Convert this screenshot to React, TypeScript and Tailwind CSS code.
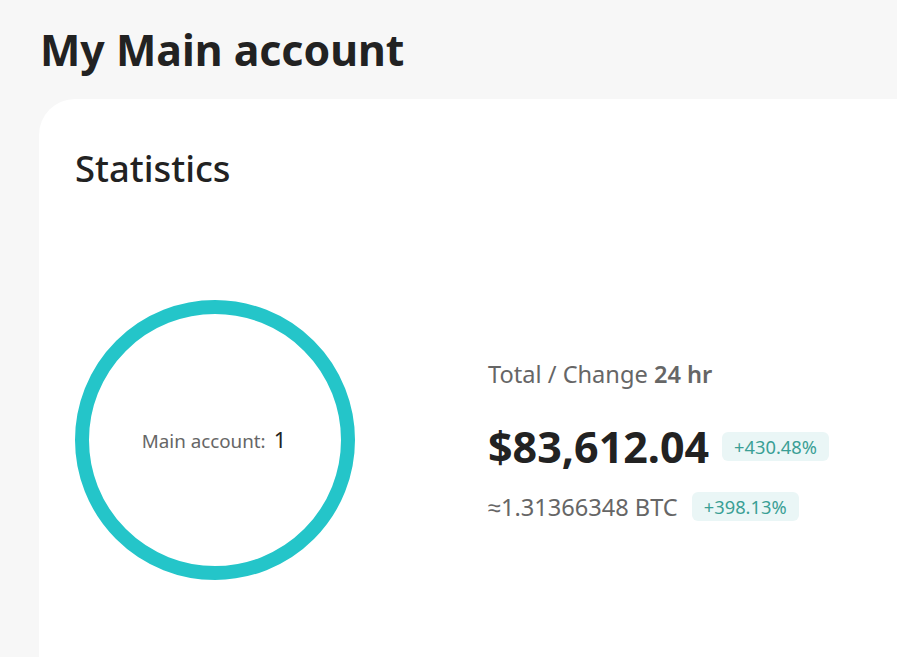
export default function App() {
  return (
    <div
      className="h-[657px] w-[897px] overflow-hidden bg-[#f7f7f7] text-[#222]"
      style={{ fontFamily: '"Noto Sans", sans-serif' }}
    >
      <h1 className="pl-[40px] pt-[22px] text-[42.8px] font-bold leading-[56px]">
        My Main account
      </h1>
      <div className="ml-[39px] mt-[21px] h-[600px] rounded-tl-[36px] bg-white pl-[36px] pt-[46px]">
        <h2 className="text-[36.4px] font-medium leading-[46px]">Statistics</h2>
        <div className="mt-[109px] flex items-center">
          <div className="relative flex h-[280px] w-[280px] items-center justify-center">
            <svg className="absolute inset-0" width="280" height="280" viewBox="0 0 280 280">
              <circle cx="140" cy="140" r="133" fill="none" stroke="#24c5c9" strokeWidth="14" />
            </svg>
            <div className="relative -ml-[2px] -mt-[2px] flex items-baseline gap-[8px]">
              <span className="text-[18.8px] text-[#666]">Main account:</span>
              <span className="text-[22px] text-[#222]">1</span>
            </div>
          </div>
          <div className="ml-[133px] flex flex-col">
            <div className="text-[23.6px] leading-[32px] text-[#666]">
              Total / Change <span className="font-semibold">24 hr</span>
            </div>
            <div className="mt-[31px] flex items-center gap-[13px]">
              <span className="text-[43px] font-bold leading-[52px] text-[#222]">$83,612.04</span>
              <span className="rounded-[6px] bg-[#eaf6f6] px-[12px] py-[2px] text-[18.3px] leading-[25px] text-[#3a9f95]">
                +430.48%
              </span>
            </div>
            <div className="mt-[18px] flex items-center gap-[14px]">
              <span className="text-[23.6px] leading-[32px] text-[#666]">≈1.31366348 BTC</span>
              <span className="rounded-[6px] bg-[#eaf6f6] px-[12px] py-[2px] text-[18.3px] leading-[25px] text-[#3a9f95]">
                +398.13%
              </span>
            </div>
          </div>
        </div>
      </div>
    </div>
  );
}
